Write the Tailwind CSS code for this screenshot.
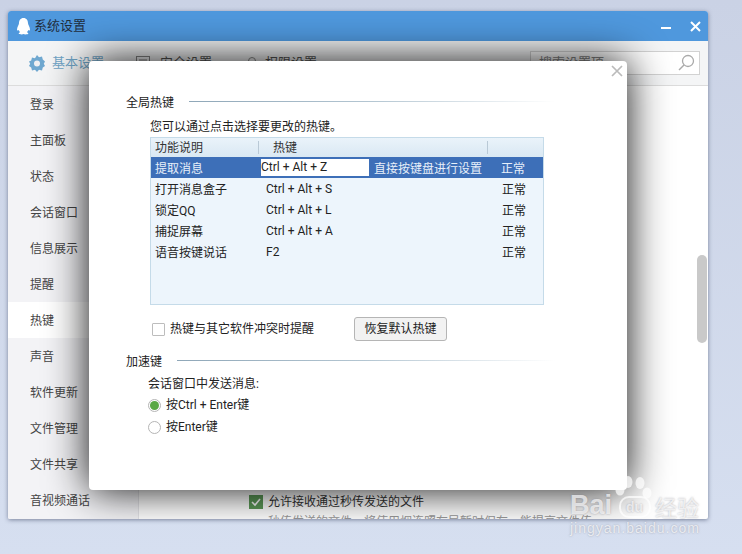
<!DOCTYPE html>
<html lang="zh">
<head>
<meta charset="utf-8">
<title>系统设置</title>
<script src="https://cdn.jsdelivr.net/npm/@tailwindcss/browser@4"></script>
</head>
<body class="relative w-[742px] h-[554px] overflow-hidden bg-gradient-to-b from-[#cad2e5] to-[#d6dff0] font-['Roboto','Noto_Sans_CJK_SC',sans-serif] text-xs text-[#333]">

<!-- 主窗口 -->
<div class="relative ml-2 mt-[11px] w-[700px] h-[508px] overflow-hidden rounded-t-[3px] rounded-b-[2px] bg-white flex flex-col shadow-[0_1px_4px_rgba(60,70,100,0.6)]">
  <div class="h-[30px] bg-[#4f98dd] flex items-center pl-[8px] shrink-0">
    <svg class="w-[15px] h-[18px]" viewBox="0 0 15 18"><path d="M7.5 1C4.5 1 3 3.4 3 6.2 3 7.6 1 10 1 12.6c0 1.200.7 1.400 1.700.3.300 1 .9 1.800 1.500 2.400-1 .3-1.500.8-1.500 1.300 0 .7 1.500.9 3 .9 .7 0 1.400-.2 1.800-.5.400.3 1.100.5 1.800.5 1.500 0 3-.2 3-.9 0-.5-.5-1-1.500-1.300.6-.6 1.200-1.400 1.500-2.400 1 1.100 1.700.9 1.700-.3C14 10 12 7.600 12 6.200 12 3.400 10.500 1 7.500 1z" fill="#fff"/></svg>
    <span class="ml-[3px] text-[13px] text-[#1f2d3d]">系统设置</span>
    <div class="ml-auto flex items-center gap-[19px] pr-[7px]">
      <span class="block w-[10px] h-[2px] mt-[3px] bg-white"></span>
      <svg class="w-[11px] h-[11px]" viewBox="0 0 11 11"><path d="M1 1l9 9M10 1l-9 9" stroke="#fff" stroke-width="2"/></svg>
    </div>
  </div>

  <div class="h-[45px] shrink-0 flex items-center border-b border-[#dcdcdc] bg-[#f4f5f6] text-[13px] text-[#555]">
    <svg class="ml-[20px] w-[18px] h-[18px]" viewBox="0 0 18 18"><path d="M9 1l2 2.200 3-.7.800 3L17 7.500 15.800 9.800 17 12l-2.200 1.500-.8 3-3-.7L9 18l-2-2.200-3 .7-.8-3L1 12l1.200-2.200L1 7.500l2.200-1 .8-3 3 .7z" fill="#6fa8d0"/><circle cx="9" cy="9.500" r="3" fill="#f0f0f2"/></svg>
    <span class="ml-[6px] text-[#6fa4c6]">基本设置</span>
    <svg class="ml-[32px] w-[14px] h-[14px]" viewBox="0 0 14 14"><rect x=".5" y=".5" width="13" height="13" fill="none" stroke="#888"/><path d="M3 3h8v8H3z" fill="#bbb"/></svg>
    <span class="ml-[10px]">安全设置</span>
    <svg class="ml-[33px] w-[14px] h-[14px]" viewBox="0 0 14 14"><circle cx="7" cy="5" r="3.500" fill="none" stroke="#888"/><path d="M1 14c1-3 3-4 6-4s5 1 6 4" fill="none" stroke="#888"/></svg>
    <span class="ml-[6px]">权限设置</span>
    <div class="ml-auto mr-2 w-[170px] h-[24px] border border-[#d2d2d2] bg-white flex items-center pl-2 pr-[4px] text-[#888]">
      <span>搜索设置项</span>
      <svg class="ml-auto w-[18px] h-[18px]" viewBox="0 0 18 18"><circle cx="11" cy="7" r="5.500" fill="none" stroke="#aaa" stroke-width="1.300"/><path d="M7 11l-5 5" stroke="#aaa" stroke-width="1.500"/></svg>
    </div>
  </div>

  <div class="flex-1 flex min-h-0">
    <div class="w-[131px] shrink-0 bg-[#f3f3f6] border-r border-[#e4e4e8] text-[#444]">
      <div class="h-9 flex items-center pl-[22px] pt-[2px]">登录</div>
      <div class="h-9 flex items-center pl-[22px] pt-[2px]">主面板</div>
      <div class="h-9 flex items-center pl-[22px] pt-[2px]">状态</div>
      <div class="h-9 flex items-center pl-[22px] pt-[2px]">会话窗口</div>
      <div class="h-9 flex items-center pl-[22px] pt-[2px]">信息展示</div>
      <div class="h-9 flex items-center pl-[22px] pt-[2px]">提醒</div>
      <div class="h-9 flex items-center pl-[22px] pt-[2px] bg-white">热键</div>
      <div class="h-9 flex items-center pl-[22px] pt-[2px]">声音</div>
      <div class="h-9 flex items-center pl-[22px] pt-[2px]">软件更新</div>
      <div class="h-9 flex items-center pl-[22px] pt-[2px]">文件管理</div>
      <div class="h-9 flex items-center pl-[22px] pt-[2px]">文件共享</div>
      <div class="h-9 flex items-center pl-[22px] pt-[2px]">音视频通话</div>
    </div>
    <div class="flex-1 relative pl-[110px] pt-[408px]">
      <div class="flex items-center text-[#333]">
        <span class="w-[14px] h-[14px] bg-[#5d9a58] flex items-center justify-center">
          <svg class="w-[10px] h-[10px]" viewBox="0 0 10 10"><path d="M1 5l3 3 5-6" fill="none" stroke="#fff" stroke-width="1.600"/></svg>
        </span>
        <span class="ml-[5px]">允许接收通过秒传发送的文件</span>
      </div>
      <div class="ml-[19px] mt-[4px] text-[#999]">秒传发送的文件，将使用烟连照存导暂时保存，能提高文件传</div>
      <div class="absolute right-[1px] top-[169px] w-[10px] h-[88px] rounded-[5px] bg-[#c9c9c9]"></div>
    </div>
  </div>

  <!-- 热键对话框 -->
  <div class="absolute left-[81px] top-[50px] w-[538px] h-[429px] rounded-[4px] bg-white pl-[37px] pt-[33px] shadow-[0_0_42px_rgba(0,0,0,0.95)] text-[#222]">
    <svg class="absolute right-[4px] top-[4px] w-[12px] h-[12px]" viewBox="0 0 12 12"><path d="M1 1l10 10M11 1L1 11" stroke="#bbb" stroke-width="1.700"/></svg>

    <div class="flex items-center h-4">
      <span class="pt-[2px]">全局热键</span>
      <span class="block ml-[15px] mb-[2px] w-[366px] h-px bg-gradient-to-r from-[#8fa7b8] via-[#b4c6d2] to-white"></span>
    </div>
    <p class="ml-[24px] mt-[8px] h-[18px] leading-[18px]">您可以通过点击选择要更改的热键。</p>

    <div class="ml-[24px] mt-[1px] w-[394px] h-[168px] border border-[#c5dbe9] bg-[#edf5fc]">
      <div class="h-[19px] flex items-center bg-gradient-to-b from-[#eaf3fa] to-[#d9e8f3] text-[#333]">
        <span class="w-[108px] pl-[4px] border-r border-[#b9c9d6] h-[13px] leading-[15px]">功能说明</span>
        <span class="w-[229px] pl-[14px] border-r border-[#b9c9d6] h-[13px] leading-[15px]">热键</span>
      </div>
      <div class="h-[21px] flex items-center bg-[#3d6fb8] text-[#e8f0fa]">
        <span class="w-[110px] pl-[4px] pt-[2px]">提取消息</span>
        <span class="w-[108px] h-[17px] bg-white text-[#222] leading-[17px]">Ctrl + Alt + Z</span>
        <span class="w-[129px] pl-[5px] pt-[2px]">直接按键盘进行设置</span>
        <span class="pl-[3px] pt-[2px]">正常</span>
      </div>
      <div class="h-[21px] flex items-center">
        <span class="w-[115px] pl-[4px] pt-[2px]">打开消息盒子</span>
        <span class="w-[236px]">Ctrl + Alt + S</span>
        <span class="pt-[2px]">正常</span>
      </div>
      <div class="h-[21px] flex items-center">
        <span class="w-[115px] pl-[4px] pt-[2px]">锁定QQ</span>
        <span class="w-[236px]">Ctrl + Alt + L</span>
        <span class="pt-[2px]">正常</span>
      </div>
      <div class="h-[21px] flex items-center">
        <span class="w-[115px] pl-[4px] pt-[2px]">捕捉屏幕</span>
        <span class="w-[236px]">Ctrl + Alt + A</span>
        <span class="pt-[2px]">正常</span>
      </div>
      <div class="h-[21px] flex items-center">
        <span class="w-[115px] pl-[4px] pt-[2px]">语音按键说话</span>
        <span class="w-[236px]">F2</span>
        <span class="pt-[2px]">正常</span>
      </div>
    </div>

    <div class="ml-[26px] mt-[12px] h-[24px] flex items-center">
      <span class="w-[13px] h-[13px] border border-[#bdbdbd] rounded-[1px] bg-white"></span>
      <span class="ml-[5px] w-[184px]">热键与其它软件冲突时提醒</span>
      <span class="w-[93px] h-[24px] border border-[#b5b5b5] rounded-[3px] bg-[#f2f2f2] flex items-center justify-center">恢复默认热键</span>
    </div>

    <div class="flex items-center h-4 mt-[12px]">
      <span class="pt-[2px]">加速键</span>
      <span class="block ml-[15px] mb-[2px] w-[378px] h-px bg-gradient-to-r from-[#8fa7b8] via-[#b4c6d2] to-white"></span>
    </div>
    <p class="ml-[22px] mt-[7px] h-4 leading-4">会话窗口中发送消息:</p>
    <div class="ml-[22px] mt-[2px] h-[22px] flex items-center">
      <span class="w-[13px] h-[13px] rounded-full border border-[#b5b5b5] flex items-center justify-center"><span class="block w-[9px] h-[9px] rounded-full bg-[#5aa845]"></span></span>
      <span class="ml-[5px]">按Ctrl + Enter键</span>
    </div>
    <div class="ml-[22px] h-[22px] flex items-center">
      <span class="w-[13px] h-[13px] rounded-full border border-[#b5b5b5] bg-white"></span>
      <span class="ml-[5px]">按Enter键</span>
    </div>
  </div>
</div>

<!-- 水印 -->
<div class="absolute left-[570px] top-[475px] w-[140px] h-[62px] text-white/70 font-['Liberation_Sans',sans-serif] [text-shadow:0_0_2px_rgba(110,110,120,0.55)]">
  <svg class="absolute left-0 top-0 w-[90px] h-[45px]" viewBox="0 0 90 45" fill="#fff" fill-opacity=".7"><ellipse cx="50" cy="15" rx="4.500" ry="5.500"/><ellipse cx="58" cy="7" rx="4.500" ry="6"/><ellipse cx="70" cy="8" rx="4.500" ry="6"/><ellipse cx="77" cy="18" rx="4.500" ry="5.500"/><rect x="50" y="22" width="30" height="20" rx="9" fill="none" stroke="#fff" stroke-opacity=".7" stroke-width="2"/></svg>
  <span class="absolute left-0 top-[14px] text-[27px] leading-[32px] font-bold">Bai</span>
  <span class="absolute left-[56px] top-[23px] text-[14px] leading-[18px] font-bold">du</span>
  <span class="absolute left-[85px] top-[18px] text-[22px] leading-[26px] font-['Noto_Sans_CJK_SC',sans-serif]">经验</span>
  <span class="absolute left-0 top-[45px] text-[14px] leading-[17px] tracking-[1px]">jingyan.baidu.com</span>
</div>
</body>
</html>
